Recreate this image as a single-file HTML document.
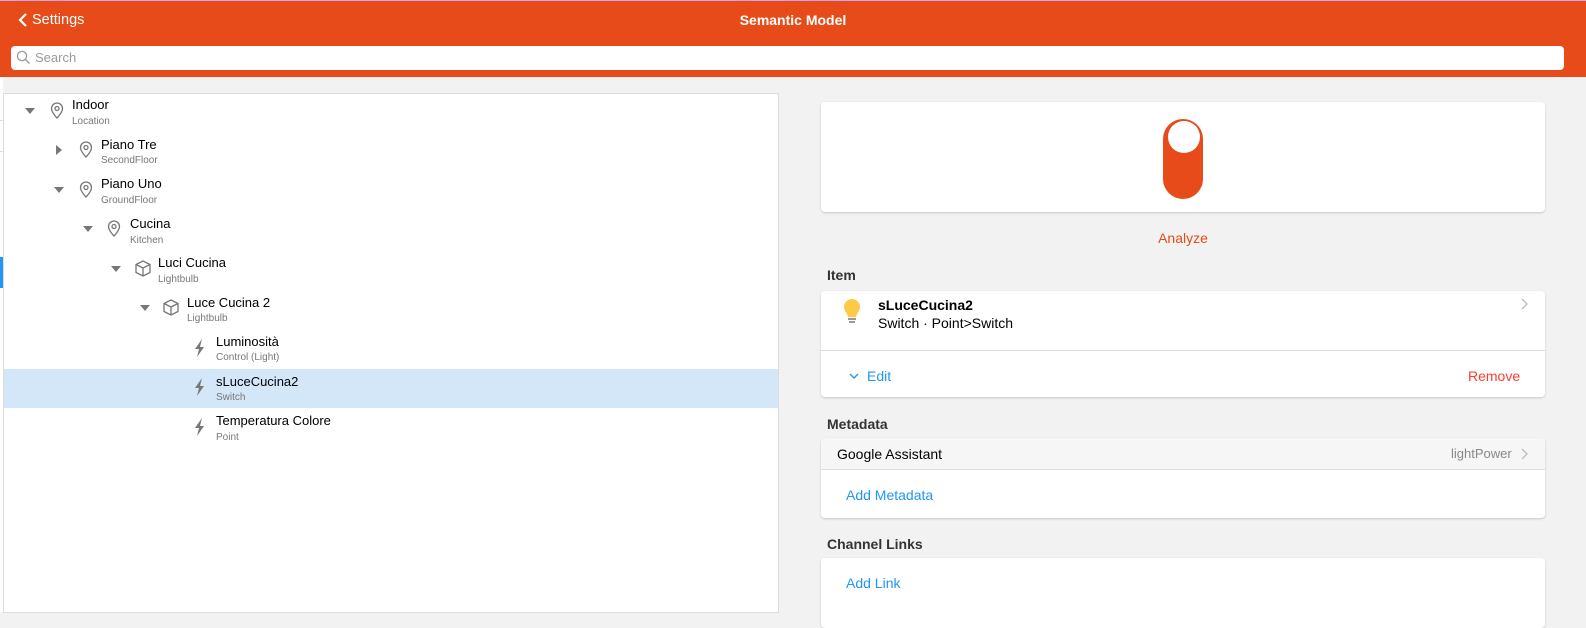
<!DOCTYPE html>
<html><head><meta charset="utf-8"><style>
*{box-sizing:border-box;margin:0;padding:0}
body{width:1586px;height:612px;overflow:hidden;background:#f2f2f2;font-family:"Liberation Sans",sans-serif;position:relative;color:#000}
.a{position:absolute}
.top{left:0;top:0;width:1586px;height:77px;background:#e64b19;border-top:1px solid #d9a0e8}
.card{position:absolute;background:#fff;border-radius:4px;box-shadow:0 1px 2px rgba(0,0,0,.18);left:821px;width:724px}
.t{font-size:13px;white-space:nowrap}
.s{font-size:10px;color:#777;white-space:nowrap}
.blue{color:#2196f3;font-size:14px}
.lbl{font-size:14px;font-weight:bold;color:#333;left:827px}
</style></head><body>
<div class="a top"></div>
<svg class="a" style="left:18px;top:13px" width="10" height="14" viewBox="0 0 10 14"><path d="M8 1L2 7l6 6" stroke="#fff" stroke-width="2.2" fill="none"/></svg>
<div class="a" style="left:32px;top:12px;color:#fff;font-size:14.5px">Settings</div>
<div class="a" style="left:0;width:1586px;text-align:center;top:12px;color:#fff;font-size:14px;font-weight:bold">Semantic Model</div>
<div class="a" style="left:11px;top:46px;width:1553px;height:24px;background:#fff;border-radius:4px"></div>
<svg class="a" style="left:16px;top:50px" width="15" height="15" viewBox="0 0 15 15"><circle cx="6" cy="6" r="4.6" stroke="#999" stroke-width="1.3" fill="none"/><path d="M9.5 9.5l4 4" stroke="#999" stroke-width="1.3"/></svg>
<div class="a" style="left:35px;top:50px;font-size:13px;color:#999">Search</div>
<!-- left strip -->
<div class="a" style="left:0;top:77px;width:3px;height:535px;background:#fff"></div>
<div class="a" style="left:0;top:120px;width:3px;height:1px;background:#ddd"></div>
<div class="a" style="left:0;top:151px;width:3px;height:1px;background:#ddd"></div>
<div class="a" style="left:0;top:257px;width:3px;height:31px;background:#2196f3"></div>
<!-- left panel -->
<div class="a" style="left:3px;top:93px;width:776px;height:520px;background:#fff;border:1px solid #ddd"></div>
<div class="a" style="left:4px;top:369px;width:774px;height:39px;background:#d3e7f8"></div>
<svg class="a" style="left:0;top:90px" width="800" height="360">
<defs>
<g id="pin"><path d="M0 -8a5.5 5.5 0 0 1 5.5 5.5c0 4-5.5 9.5-5.5 9.5s-5.5-5.5-5.5-9.5A5.5 5.5 0 0 1 0 -8z" stroke="#777" stroke-width="1.3" fill="none"/><circle cx="0" cy="-2.5" r="2" stroke="#777" stroke-width="1.3" fill="none"/></g>
<g id="box"><path d="M0 -8l7 3.5v8L0 7l-7-3.5v-8z M-7 -4.5L0 -1l7 -3.5 M0 -1v8" stroke="#777" stroke-width="1.3" fill="none" stroke-linejoin="round"/></g>
<g id="bolt"><path d="M2 -9L-5 1h4l-2 8 7-10h-4z" fill="#777"/></g>
<path id="dn" d="M-5 -3h10l-5 6z" fill="#777"/>
</defs>
<use href="#dn" x="30" y="21"/><use href="#pin" x="57" y="21"/>
<use href="#dn" x="0" y="0" style="display:none"/>
<path d="M56 55v10l6-5z" fill="#777"/><use href="#pin" x="86" y="60"/>
<use href="#dn" x="59" y="100"/><use href="#pin" x="86" y="100"/>
<use href="#dn" x="88" y="139"/><use href="#pin" x="114" y="139"/>
<use href="#dn" x="116" y="179"/><use href="#box" x="143" y="179"/>
<use href="#dn" x="145" y="218"/><use href="#box" x="171" y="218"/>
<use href="#bolt" x="200" y="258"/>
<use href="#bolt" x="200" y="297"/>
<use href="#bolt" x="200" y="337"/>
</svg>
<div class="a t" style="left:72px;top:97px">Indoor</div><div class="a s" style="left:72px;top:116px">Location</div>
<div class="a t" style="left:101px;top:137px">Piano Tre</div><div class="a s" style="left:101px;top:155px">SecondFloor</div>
<div class="a t" style="left:101px;top:176px">Piano Uno</div><div class="a s" style="left:101px;top:195px">GroundFloor</div>
<div class="a t" style="left:130px;top:216px">Cucina</div><div class="a s" style="left:130px;top:235px">Kitchen</div>
<div class="a t" style="left:158px;top:255px">Luci Cucina</div><div class="a s" style="left:158px;top:274px">Lightbulb</div>
<div class="a t" style="left:187px;top:295px">Luce Cucina 2</div><div class="a s" style="left:187px;top:313px">Lightbulb</div>
<div class="a t" style="left:216px;top:334px">Luminosità</div><div class="a s" style="left:216px;top:352px">Control (Light)</div>
<div class="a t" style="left:216px;top:374px">sLuceCucina2</div><div class="a s" style="left:216px;top:392px">Switch</div>
<div class="a t" style="left:216px;top:413px">Temperatura Colore</div><div class="a s" style="left:216px;top:432px">Point</div>
<!-- right -->
<div class="card" style="top:102px;height:110px"></div>
<div class="a" style="left:1163px;top:119px;width:40px;height:80px;border-radius:20px;background:#e64b19"></div>
<div class="a" style="left:1168px;top:121px;width:32px;height:32px;border-radius:50%;background:#fff"></div>
<div class="a" style="left:821px;width:724px;text-align:center;top:230px;color:#e64b19;font-size:14px">Analyze</div>
<div class="a lbl" style="top:267px">Item</div>
<div class="card" style="top:291px;height:106px"></div>
<div class="a" style="left:821px;top:350px;width:724px;height:1px;background:#ddd"></div>
<svg class="a" style="left:842px;top:298px" width="20" height="28" viewBox="0 0 20 28"><path d="M10 1a8 8 0 0 1 8 8c0 3-2 5-3 7l-1 3H6l-1-3c-1-2-3-4-3-7a8 8 0 0 1 8-8z" fill="#fec947"/><rect x="6" y="20" width="8" height="2" fill="#999"/><rect x="7" y="23" width="6" height="2" fill="#999"/></svg>
<div class="a" style="left:878px;top:297px;font-size:14px;font-weight:bold">sLuceCucina2</div>
<div class="a" style="left:878px;top:315px;font-size:14px">Switch · Point&gt;Switch</div>
<svg class="a" style="left:1521px;top:298px" width="8" height="12"><path d="M1 1l5 5-5 5" stroke="#bbb" stroke-width="1.3" fill="none"/></svg>
<svg class="a" style="left:849px;top:372px" width="10" height="8"><path d="M1 2l4 4 4-4" stroke="#2196f3" stroke-width="1.4" fill="none"/></svg>
<div class="a blue" style="left:867px;top:368px">Edit</div>
<div class="a" style="left:1468px;top:368px;font-size:14px;color:#ff3b30">Remove</div>
<div class="a lbl" style="top:416px">Metadata</div>
<div class="card" style="top:438px;height:80px;overflow:hidden"><div style="height:32px;background:#f6f6f6;border-bottom:1px solid #ddd"></div></div>
<div class="a" style="left:837px;top:446px;font-size:14px">Google Assistant</div>
<div class="a" style="left:1451px;top:446px;font-size:13px;color:#888">lightPower</div>
<svg class="a" style="left:1521px;top:448px" width="8" height="12"><path d="M1 1l5 5-5 5" stroke="#bbb" stroke-width="1.3" fill="none"/></svg>
<div class="a blue" style="left:846px;top:487px">Add Metadata</div>
<div class="a lbl" style="top:536px">Channel Links</div>
<div class="card" style="top:558px;height:70px"></div>
<div class="a blue" style="left:846px;top:575px">Add Link</div>
</body></html>
